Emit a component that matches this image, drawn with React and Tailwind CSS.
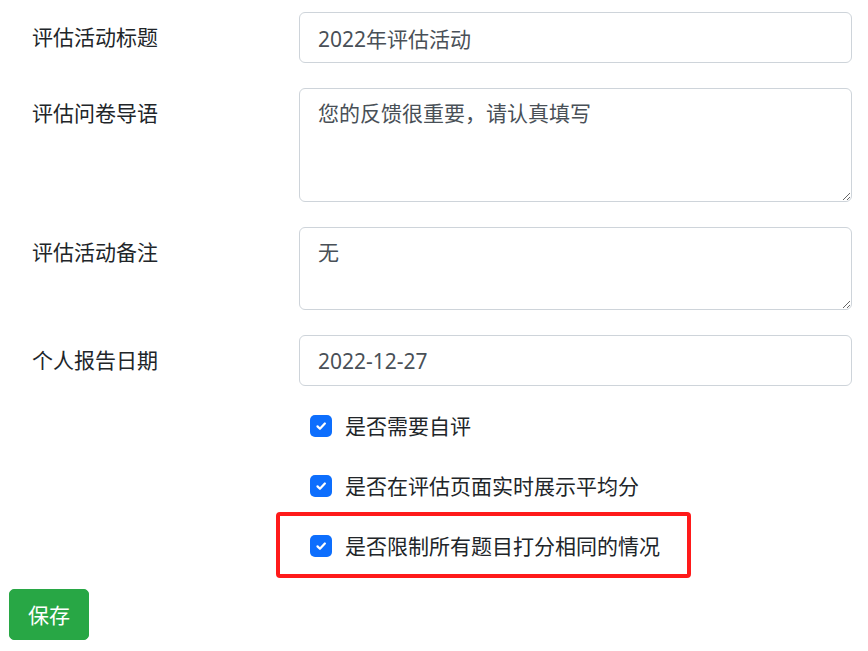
import React from 'react';

const font = { fontFamily: '"Noto Sans", "Noto Sans CJK SC", sans-serif' };

// Form row: label column + control
const FormRow = ({ label, children }) => (
  <div className="flex items-start mb-[25px]">
    <label className="w-[290px] shrink-0 pl-[23px] pt-[9px] leading-[32px] text-[21px] text-[#212529]">
      {label}
    </label>
    <div className="flex-1">{children}</div>
  </div>
);

const inputCls =
  'block w-full border border-[#ced4da] rounded-[6px] px-[18px] py-[8px] leading-[32px] text-[21px] text-[#495057] bg-white outline-none';

const CheckRow = ({ label, highlight }) => (
  <div className="relative flex items-center h-[60px] pl-[11px]">
    <span className="flex items-center justify-center w-[22px] h-[22px] rounded-[5px] bg-[#0d6efd]">
      <svg width="14" height="14" viewBox="0 0 20 20" fill="none">
        <path d="M5 10.5l3.5 3.5l7-7.5" stroke="white" strokeWidth="3.2" strokeLinecap="round" strokeLinejoin="round" />
      </svg>
    </span>
    <span className="ml-[13px] text-[21px] leading-[32px] text-[#212529]">{label}</span>
    {highlight && (
      <div className="absolute top-[-4px] left-[-23px] w-[415px] h-[66px] border-[4px] border-[#ff1a1a] rounded-[4px] pointer-events-none" />
    )}
  </div>
);

const App = () => {
  return (
    <div className="min-h-screen bg-white pt-[12px] pl-[9px] pr-[16px]" style={font}>
      <FormRow label="评估活动标题">
        <input className={`${inputCls} h-[51px]`} defaultValue="2022年评估活动" style={font} />
      </FormRow>
      <FormRow label="评估问卷导语">
        <textarea className={`${inputCls} h-[114px] resize-y`} defaultValue="您的反馈很重要，请认真填写" style={font} />
      </FormRow>
      <FormRow label="评估活动备注">
        <textarea className={`${inputCls} h-[83px] resize-y`} defaultValue="无" style={font} />
      </FormRow>
      <FormRow label="个人报告日期">
        <input className={`${inputCls} h-[51px]`} defaultValue="2022-12-27" style={font} />
      </FormRow>

      <div className="ml-[290px] -mt-[15px]">
        <CheckRow label="是否需要自评" />
        <CheckRow label="是否在评估页面实时展示平均分" />
        <CheckRow label="是否限制所有题目打分相同的情况" highlight />
      </div>

      <button className="mt-[13px] h-[51px] px-[18px] rounded-[5px] bg-[#28a745] border border-[#28a745] text-white text-[21px] leading-[32px]">
        保存
      </button>
    </div>
  );
};

export default App;
